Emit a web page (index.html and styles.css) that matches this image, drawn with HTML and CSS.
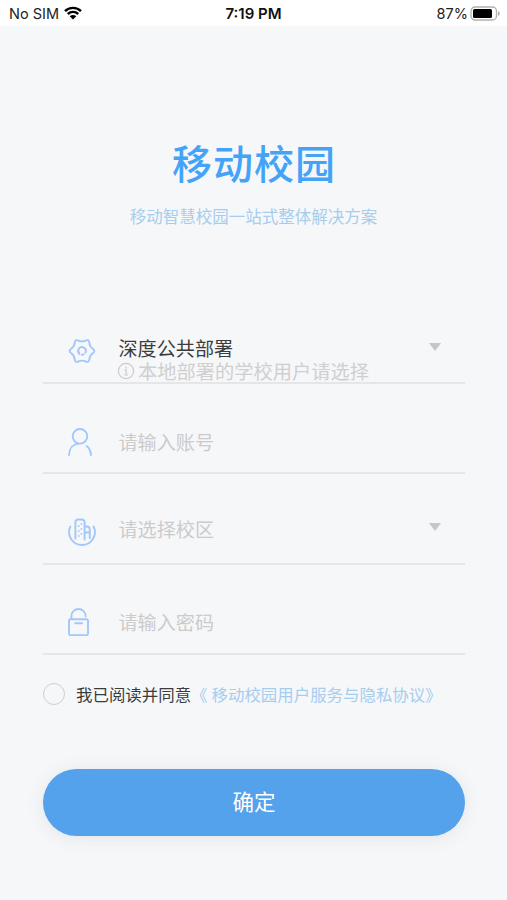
FILE: index.html
```html
<!DOCTYPE html>
<html lang="zh-CN">
<head>
  <meta charset="UTF-8" />
  <meta name="viewport" content="width=device-width, initial-scale=1.0"/>
  <title>移动校园</title>
  <link rel="stylesheet" href="styles.css">
</head>
<body>
  <div class="status">
    <div class="status-left">
      <span>No SIM</span>
      <svg class="wifi" viewBox="0 0 18 14" width="18" height="14">
        <path d="M1 5.2C5.4 .8 12.6 .8 17 5.2M3.8 8C6.8 5.2 11.2 5.2 14.2 8" fill="none" stroke="#000" stroke-width="2.4"/>
        <path d="M9 13.6L5.7 10.3C7.5 8.6 10.5 8.6 12.3 10.3Z"/>
      </svg>
    </div>
    <div class="time">7:19 PM</div>
    <div class="status-right">
      <span>87%</span>
      <svg viewBox="0 0 31 15" width="31" height="15">
        <rect x="1" y="1" width="25.5" height="13" rx="4" fill="#fff" stroke="#b0b0b0" stroke-width="1.3"/>
        <rect x="3" y="3" width="19" height="9" rx="1.5"/>
        <path d="M28 5.2C30.4 6 30.4 9 28 9.8Z" fill="#b0b0b0"/>
      </svg>
    </div>
  </div>

  <div class="login">
    <h1>移动校园</h1>
    <p class="slogan">移动智慧校园一站式整体解决方案</p>

    <div class="form">
      <div class="row server">
        <svg class="icon" viewBox="0 0 28 28" width="28" height="28">
          <path d="M24.8 16.2Q21.6 18.4 21.3 22.2Q21 26.1 17.5 24.4Q14 22.8 10.5 24.4Q7 26.1 6.7 22.2Q6.4 18.4 3.2 16.2Q0 14 3.2 11.8Q6.4 9.6 6.7 5.8Q7 1.9 10.5 3.6Q14 5.2 17.5 3.6Q21 1.9 21.3 5.8Q21.6 9.6 24.8 11.8Q28 14 24.8 16.2Z"/>
          <path d="M11.6 16.9A3.8 3.8 0 1 1 17.5 15.5M14 17.8A3.8 3.8 0 0 0 15.8 17.3"/>
        </svg>
        <div class="text">
          <div class="value">深度公共部署</div>
          <div class="hint">
            <svg viewBox="0 0 18 18" width="18" height="18">
              <circle cx="9" cy="9" r="7.6"/>
              <path d="M9 4.6V6.2M7.5 7.9H9.2V13M7.3 13H11"/>
            </svg>
            <span>本地部署的学校用户请选择</span>
          </div>
        </div>
        <span class="arrow"></span>
      </div>

      <div class="row account">
        <svg class="icon" viewBox="0 0 28 28" width="28" height="28">
          <circle cx="12" cy="8.3" r="7.3"/>
          <path d="M1 27C1.2 20.5 5 16.2 10.5 15.6M18.6 18C21.2 20 22.7 23 23 27"/>
        </svg>
        <div class="text">请输入账号</div>
      </div>

      <div class="row campus">
        <svg class="icon" viewBox="0 0 28 28" width="28" height="28">
          <path d="M2.4 8.5A12.9 12.9 0 1 0 25.6 8.5"/>
          <path d="M7.4 20.5V4.5Q7.4 1.5 10.4 1.5H13.6Q16.6 1.5 16.6 4.5V21.5M16.6 8.5H18.8Q21.8 8.5 21.8 11.5V20M17 14.5H21.5"/>
          <path class="thin" d="M10.3 8H11.2M13 6H13.8M10.3 13H11.2M13 11H13.8M10.3 18H11.2M13 16H13.8"/>
        </svg>
        <div class="text">请选择校区</div>
        <span class="arrow"></span>
      </div>

      <div class="row password">
        <svg class="icon" viewBox="0 0 28 28" width="28" height="28">
          <rect x="1" y="11.2" width="19" height="16" rx="1.6"/>
          <path d="M3.4 11V8.3C3.6-1.4 17.4-1.4 17.7 8.3M7.2 15.3H14"/>
        </svg>
        <div class="text">请输入密码</div>
      </div>
    </div>

    <div class="agree">
      <span class="radio"></span>
      <span>我已阅读并同意</span><a>《<i></i>移动校园用户服务与隐私协议》</a>
    </div>

    <button class="submit">确定</button>
  </div>
</body>
</html>
```

FILE: styles.css
```css
* {
  box-sizing: border-box;
}
body {
  margin: 0;
  height: 900px;
  background: #f6f7f9;
  font-family: "Noto Sans CJK SC", sans-serif;
  overflow: hidden;
}
.status {
  display: grid;
  grid-template-columns: 1fr auto 1fr;
  align-items: center;
  height: 26px;
  padding: 1px 6px 0 9px;
  background: #fff;
  color: #222;
  font-family: Inter, sans-serif;
  font-size: 14.5px;
}
.status-left, .status-right {
  display: flex;
  align-items: center;
}
.status-left {
  gap: 5px;
}
.wifi {
  margin-top: -2px;
}
.status-right {
  justify-content: flex-end;
  gap: 2px;
}
.time {
  margin-right: 3px;
  font-size: 15px;
  font-weight: 600;
  color: #111;
}
.login {
  padding: 110px 42px 0 43px;
}
h1 {
  margin: 0;
  height: 52px;
  line-height: 52px;
  font-size: 40px;
  font-weight: 500;
  letter-spacing: 1px;
  text-align: center;
  color: #45a3f7;
}
.slogan {
  margin: 14px 0 0 -1px;
  height: 28px;
  line-height: 28px;
  font-size: 16.5px;
  text-align: center;
  color: #a6cdee;
}
.form {
  margin-top: 64px;
}
.row {
  display: flex;
  align-items: flex-start;
  height: 90.2px;
  padding: 0 24px 0 25px;
  border-bottom: 2px solid #e6e6e8;
  font-size: 19.1px;
  line-height: 24px;
  color: #cbcbcb;
}
.icon {
  flex: none;
  margin-right: 22.5px;
  fill: none;
  stroke: #a3c7fb;
  stroke-width: 1.9;
  stroke-linecap: round;
  stroke-linejoin: round;
}
.icon .thin {
  stroke-width: 1.3;
}
.text {
  flex: 1;
  white-space: nowrap;
}
.value {
  color: #3c3c3c;
}
.hint {
  display: flex;
  align-items: center;
  gap: 3px;
  margin: -1px 0 0 -1.5px;
  font-size: 19.25px;
  color: #cfcfcf;
}
.hint svg {
  fill: none;
  stroke: #cbcbcb;
  stroke-width: 1.2;
}
.arrow {
  border: 6px solid transparent;
  border-top: 8px solid #c6c6c8;
  border-bottom: 0;
}
.server {
  padding-top: 42px;
}
.server .icon {
  margin-top: 1px;
}
.server .arrow {
  margin-top: 7px;
}
.account {
  padding-top: 46px;
}
.account .icon {
  margin-top: -2px;
}
.campus {
  padding-top: 42.5px;
}
.campus .icon {
  margin-top: 1px;
}
.campus .arrow {
  margin-top: 6px;
}
.password {
  padding-top: 45.5px;
}
.password .icon {
  margin-top: -2px;
}
.agree {
  display: flex;
  align-items: center;
  height: 32px;
  margin-top: 23px;
  font-size: 16.45px;
  white-space: nowrap;
  color: #3c3c3c;
}
.radio {
  width: 22px;
  height: 22px;
  margin-right: 11px;
  border: 1.5px solid #cfcfcf;
  border-radius: 50%;
}
.agree a {
  color: #a6cdee;
}
.agree i {
  display: inline-block;
  width: 4px;
}
.submit {
  display: block;
  width: 100%;
  height: 67px;
  margin-top: 59px;
  padding: 0 0 3px;
  border: none;
  border-radius: 34px;
  background: #54a1ec;
  box-shadow: 0 2px 18px rgba(60, 90, 100, 0.11);
  color: #fff;
  font-family: inherit;
  font-size: 21.5px;
}
```
